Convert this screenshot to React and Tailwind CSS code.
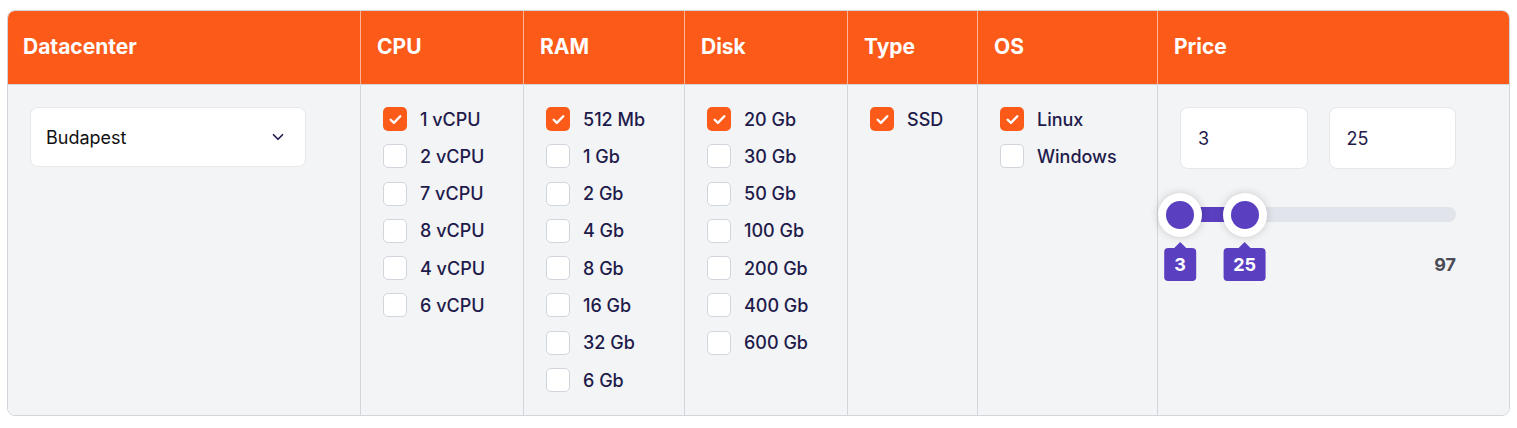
import React from 'react';
import { ChevronDown } from 'lucide-react';

const columns = [
  { title: 'CPU', options: [['1 vCPU', true], ['2 vCPU'], ['7 vCPU'], ['8 vCPU'], ['4 vCPU'], ['6 vCPU']] },
  { title: 'RAM', options: [['512 Mb', true], ['1 Gb'], ['2 Gb'], ['4 Gb'], ['8 Gb'], ['16 Gb'], ['32 Gb'], ['6 Gb']] },
  { title: 'Disk', options: [['20 Gb', true], ['30 Gb'], ['50 Gb'], ['100 Gb'], ['200 Gb'], ['400 Gb'], ['600 Gb']] },
  { title: 'Type', options: [['SSD', true]] },
  { title: 'OS', options: [['Linux', true], ['Windows']] },
];

const Checkbox = ({ label, checked }) => (
  <label className="flex items-center gap-[13px] h-6">
    {checked ? (
      <span className="w-6 h-6 rounded-[5px] bg-[#fc5a19] flex items-center justify-center">
        <svg width="15" height="15" viewBox="0 0 14 14" fill="none">
          <path d="M2.5 7.2l3 3 6-6.2" stroke="white" strokeWidth="2.2" strokeLinecap="round" strokeLinejoin="round" />
        </svg>
      </span>
    ) : (
      <span className="w-6 h-6 rounded-[5px] bg-white border border-gray-300" />
    )}
    <span className="text-[18px] font-medium text-[#1e1b4b]">{label}</span>
  </label>
);

const Thumb = ({ left, value }) => (
  <div className="absolute top-1/2" style={{ left }}>
    <div className="absolute -translate-x-1/2 -translate-y-1/2 w-11 h-11 rounded-full bg-white shadow-[0_0_8px_rgba(0,0,0,0.18)] flex items-center justify-center">
      <div className="w-7 h-7 rounded-full bg-[#5b3fc1]" />
    </div>
    <div className="absolute -translate-x-1/2 top-[27px] flex flex-col items-center">
      <div className="w-0 h-0 border-l-[6px] border-r-[6px] border-b-[6px] border-l-transparent border-r-transparent border-b-[#5b3fc1]" />
      <div className="bg-[#5b3fc1] text-white text-[18px] font-bold rounded-[4px] h-[33px] px-[10px] flex items-center">{value}</div>
    </div>
  </div>
);

export default function App() {
  const min = 3;
  const max = 97;
  const lo = 3;
  const hi = 25;
  const pct = (v) => `${((v - min) / (max - min)) * 100}%`;

  return (
    <div className="pt-[10px] px-[7px] bg-white" style={{ fontFamily: 'Inter, "Noto Sans", sans-serif' }}>
      <div className="w-[1503px] border border-gray-300 rounded-lg overflow-hidden grid grid-cols-[352px_163px_161px_163px_130px_180px_352px]">
        {/* header */}
        <div className="h-[73px] bg-[#fc5a19] flex items-center pb-[2px] px-[15px] text-white text-[21px] font-bold">Datacenter</div>
        {columns.map((c) => (
          <div key={c.title} className="h-[73px] bg-[#fc5a19] border-l border-[#fbb497] flex items-center pb-[2px] px-[16px] text-white text-[21px] font-bold">
            {c.title}
          </div>
        ))}
        <div className="h-[73px] bg-[#fc5a19] border-l border-[#fbb497] flex items-center pb-[2px] px-[16px] text-white text-[21px] font-bold">Price</div>

        {/* body */}
        <div className="bg-[#f3f4f6] border-t border-gray-300 pt-[22px] pb-[23px] px-[22px]">
          <div className="w-[276px] h-[60px] bg-white border border-gray-200 rounded-lg flex items-center justify-between pl-[15px] pr-[18px]">
            <span className="text-[18px] text-[#111]">Budapest</span>
            <ChevronDown size={18} strokeWidth={2.2} className="text-[#1e1b4b]" />
          </div>
        </div>
        {columns.map((c) => (
          <div key={c.title} className="bg-[#f3f4f6] border-t border-l border-gray-300 pt-[22px] pb-[23px] px-[22px]">
            <div className="flex flex-col gap-[13.3px]">
              {c.options.map(([label, checked]) => (
                <Checkbox key={label} label={label} checked={checked} />
              ))}
            </div>
          </div>
        ))}
        <div className="bg-[#f3f4f6] border-t border-l border-gray-300 pt-[22px] px-[22px]">
          <div className="w-[276px]">
            <div className="flex gap-[21px]">
              <div className="w-[128px] h-[62px] bg-white border border-gray-200 rounded-lg flex items-center px-[17px] text-[18px] text-[#1e1b4b]">{lo}</div>
              <div className="w-[128px] h-[62px] bg-white border border-gray-200 rounded-lg flex items-center px-[17px] text-[18px] text-[#1e1b4b]">{hi}</div>
            </div>
            <div className="relative h-[15px] mt-[38px] bg-[#e1e4eb] rounded-full">
              <div className="absolute top-0 h-full bg-[#5b3fc1]" style={{ left: pct(lo), width: `calc(${pct(hi)} - ${pct(lo)})` }} />
              <Thumb left={pct(lo)} value={lo} />
              <Thumb left={pct(hi)} value={hi} />
            </div>
            <div className="flex justify-end mt-[29px] text-[18px] font-bold text-[#4b4b55]">{max}</div>
          </div>
        </div>
      </div>
    </div>
  );
}
